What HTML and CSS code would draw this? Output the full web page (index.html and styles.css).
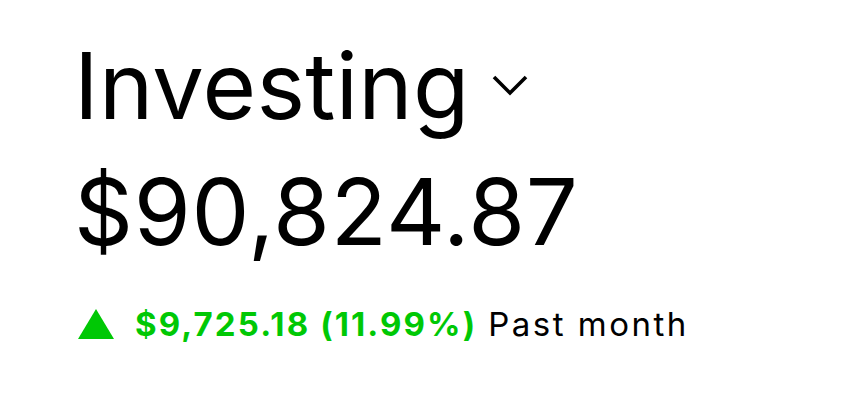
FILE: index.html
```
<!DOCTYPE html>
<html lang="en">
<head>
<meta charset="utf-8">
<title>Investing</title>
<link rel="stylesheet" href="styles.css">
</head>
<body>
<main class="summary">
  <div class="title-row">
    <h1 class="title">Investing</h1>
    <svg class="chevron" width="36" height="22" viewBox="0 0 36 22" aria-hidden="true">
      <path d="M2 3 L18 19 L34 3" fill="none" stroke="#000" stroke-width="3.6" stroke-linecap="butt" stroke-linejoin="miter"/>
    </svg>
  </div>
  <div class="balance">$90,824.87</div>
  <div class="change">
    <svg class="tri" width="36" height="30" viewBox="0 0 36 30" aria-hidden="true">
      <polygon points="18,0 36,30 0,30" fill="#00c805"/>
    </svg>
    <span class="gain">$9,725.18 (11.99%)</span>
    <span class="period">Past month</span>
  </div>
</main>
</body>
</html>
```
FILE: styles.css
```
html, body {
  margin: 0;
  padding: 0;
  background: #fff;
}
body {
  font-family: Inter, "Liberation Sans", sans-serif;
  color: #000;
}
.summary {
  padding: 36px 0 0 74px;
}
.title-row {
  display: flex;
  align-items: center;
  gap: 22px;
  height: 100px;
}
.title {
  margin: 0;
  font-size: 92px;
  font-weight: 400;
  line-height: 100px;
  letter-spacing: 0.3px;
}
.chevron {
  margin-top: -2px;
}
.balance {
  font-size: 92px;
  line-height: 100px;
  margin-top: 26px;
  letter-spacing: 0.7px;
}
.change {
  display: flex;
  align-items: center;
  margin-top: 42px;
  font-size: 33px;
  line-height: 40px;
}
.tri {
  margin-left: 4px;
  margin-right: 21px;
}
.gain {
  color: #00c805;
  font-weight: 700;
  letter-spacing: 2.1px;
  margin-right: 11px;
}
.period {
  color: #000;
  letter-spacing: 2.5px;
}
```
